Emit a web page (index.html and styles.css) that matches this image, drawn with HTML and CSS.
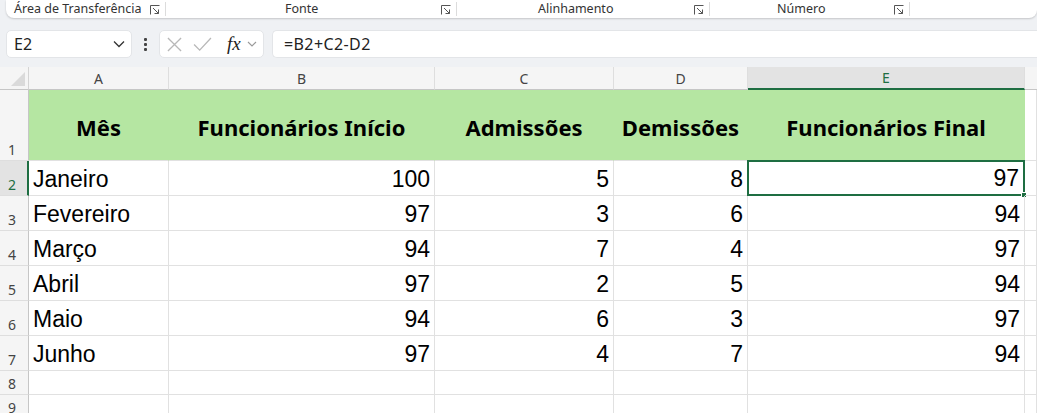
FILE: index.html
```html
<!DOCTYPE html>
<html lang="pt">
<head>
<meta charset="utf-8">
<title>Planilha</title>
<link rel="stylesheet" href="styles.css">
</head>
<body>
<div class="ribbon">
  <div class="group g1"><span class="glabel">Área de Transferência</span><svg class="launch" viewBox="0 0 10 10"><path d="M0.5 9.5V0.5H9.5" fill="none" stroke="#555" stroke-width="1"/><path d="M3 3L8.5 8.5M8.5 4.5V8.5H4.5" fill="none" stroke="#555" stroke-width="1"/></svg></div>
  <div class="group g2"><span class="glabel">Fonte</span><svg class="launch" viewBox="0 0 10 10"><path d="M0.5 9.5V0.5H9.5" fill="none" stroke="#555" stroke-width="1"/><path d="M3 3L8.5 8.5M8.5 4.5V8.5H4.5" fill="none" stroke="#555" stroke-width="1"/></svg></div>
  <div class="group g3"><span class="glabel">Alinhamento</span><svg class="launch" viewBox="0 0 10 10"><path d="M0.5 9.5V0.5H9.5" fill="none" stroke="#555" stroke-width="1"/><path d="M3 3L8.5 8.5M8.5 4.5V8.5H4.5" fill="none" stroke="#555" stroke-width="1"/></svg></div>
  <div class="group g4"><span class="glabel">Número</span><svg class="launch" viewBox="0 0 10 10"><path d="M0.5 9.5V0.5H9.5" fill="none" stroke="#555" stroke-width="1"/><path d="M3 3L8.5 8.5M8.5 4.5V8.5H4.5" fill="none" stroke="#555" stroke-width="1"/></svg></div>
</div>

<div class="fbar">
  <div class="namebox"><span>E2</span><svg class="chev" viewBox="0 0 12 8"><path d="M1 1.5L6 6.5L11 1.5" fill="none" stroke="#333" stroke-width="1.3"/></svg></div>
  <div class="dots"><span></span><span></span><span></span></div>
  <div class="fnbox">
    <svg class="ico-x" viewBox="0 0 16 16"><path d="M1 1L15 15M15 1L1 15" stroke="#b8b8b8" stroke-width="1.4" fill="none"/></svg>
    <svg class="ico-ok" viewBox="0 0 20 16"><path d="M1 8L7 14L19 1" stroke="#b8b8b8" stroke-width="1.4" fill="none"/></svg>
    <span class="fx">fx</span>
    <svg class="chev-s" viewBox="0 0 10 6"><path d="M1 1L5 5L9 1" fill="none" stroke="#999" stroke-width="1.1"/></svg>
  </div>
  <div class="formula">=B2+C2-D2</div>
</div>

<div class="sheet">
  <div class="corner"></div>
  <div class="ch">A</div><div class="ch">B</div><div class="ch">C</div><div class="ch">D</div><div class="ch sel">E</div><div class="ch last"></div>

  <div class="rh">1</div>
  <div class="c hd">Mês</div><div class="c hd">Funcionários Início</div><div class="c hd">Admissões</div><div class="c hd">Demissões</div><div class="c hd">Funcionários Final</div><div class="c"></div>

  <div class="rh rsel">2</div>
  <div class="c t">Janeiro</div><div class="c n">100</div><div class="c n">5</div><div class="c n">8</div><div class="c n active">97<span class="handle"></span></div><div class="c"></div>

  <div class="rh">3</div>
  <div class="c t">Fevereiro</div><div class="c n">97</div><div class="c n">3</div><div class="c n">6</div><div class="c n">94</div><div class="c"></div>

  <div class="rh">4</div>
  <div class="c t">Março</div><div class="c n">94</div><div class="c n">7</div><div class="c n">4</div><div class="c n">97</div><div class="c"></div>

  <div class="rh">5</div>
  <div class="c t">Abril</div><div class="c n">97</div><div class="c n">2</div><div class="c n">5</div><div class="c n">94</div><div class="c"></div>

  <div class="rh">6</div>
  <div class="c t">Maio</div><div class="c n">94</div><div class="c n">6</div><div class="c n">3</div><div class="c n">97</div><div class="c"></div>

  <div class="rh">7</div>
  <div class="c t">Junho</div><div class="c n">97</div><div class="c n">4</div><div class="c n">7</div><div class="c n">94</div><div class="c"></div>

  <div class="rh">8</div>
  <div class="c"></div><div class="c"></div><div class="c"></div><div class="c"></div><div class="c"></div><div class="c"></div>

  <div class="rh">9</div>
  <div class="c"></div><div class="c"></div><div class="c"></div><div class="c"></div><div class="c"></div><div class="c"></div>
</div>
</body>
</html>
```

FILE: styles.css
```css
* { box-sizing: border-box; }
html, body { margin: 0; padding: 0; }
body {
  width: 1037px;
  height: 413px;
  overflow: hidden;
  background: #eff1f4;
  font-family: "Noto Sans", "Open Sans", sans-serif;
  color: #000;
}

/* ribbon */
.ribbon {
  margin-left: 6px;
  height: 18px;
  background: #fff;
  border-radius: 0 0 8px 8px;
  box-shadow: 0 1px 2px rgba(0,0,0,0.18);
  display: flex;
  align-items: center;
}
.group {
  height: 14px;
  display: flex;
  align-items: center;
  border-right: 1px solid #dcdcdc;
}
.g1 { width: 160px; padding-left: 8px; }
.g2 { width: 291px; padding-left: 119px; }
.g3 { width: 253px; padding-left: 81px; }
.g4 { width: 200px; padding-left: 67px; }
.glabel {
  font-size: 12.5px;
  color: #333;
  line-height: 14px;
  white-space: nowrap;
}
.launch { width: 10px; height: 10px; margin: 1px 5px 0 auto; flex: none; }

/* formula bar */
.fbar {
  margin-top: 12px;
  height: 28px;
  display: flex;
  align-items: stretch;
  padding-left: 6px;
}
.namebox {
  width: 126px;
  background: #fff;
  border: 1px solid #e3e5e8;
  border-radius: 5px;
  display: flex;
  align-items: center;
  padding: 0 6px 0 7px;
  font-size: 16px;
  color: #222;
}
.namebox span { flex: 1; }
.chev { width: 12px; height: 8px; }
.dots {
  width: 27px;
  display: flex;
  flex-direction: column;
  align-items: center;
  justify-content: center;
  gap: 2px;
}
.dots span { width: 3px; height: 3px; background: #444; border-radius: 1px; }
.fnbox {
  width: 105px;
  background: #fff;
  border: 1px solid #e3e5e8;
  border-radius: 5px;
  display: flex;
  align-items: center;
  padding-left: 7px;
}
.ico-x { width: 15px; height: 15px; }
.ico-ok { width: 19px; height: 15px; margin-left: 11px; }
.fx {
  font-family: "Liberation Serif", "DejaVu Serif", serif;
  font-style: italic;
  font-size: 19px;
  color: #222;
  margin-left: 15px;
  line-height: 1;
  margin-top: -2px;
}
.chev-s { width: 10px; height: 6px; margin-left: 6px; }
.formula {
  flex: 1;
  margin-left: 8px;
  background: #fff;
  border: 1px solid #e3e5e8;
  border-right: none;
  border-radius: 5px 0 0 5px;
  font-size: 16px;
  color: #222;
  display: flex;
  align-items: center;
  padding-left: 11px;
  letter-spacing: 0.4px;
}

/* sheet */
.sheet {
  margin-top: 9px;
  display: grid;
  grid-template-columns: 29px 140px 266px 179px 134px 277px 12px;
  grid-template-rows: 23px 71px 35px 35px 35px 35px 35px 35px 24px 24px;
  background: #fff;
}
.corner {
  background: #f5f5f5;
  border-right: 1px solid #d4d4d4;
  border-bottom: 1px solid #c6c6c6;
  position: relative;
}
.corner::after {
  content: "";
  position: absolute;
  right: 3px;
  bottom: 3px;
  width: 0;
  height: 0;
  border-left: 14px solid transparent;
  border-bottom: 14px solid #dadada;
}
.ch {
  background: #f5f5f5;
  border-right: 1px solid #dedede;
  border-bottom: 1px solid #c6c6c6;
  font-size: 14px;
  color: #444;
  display: flex;
  align-items: center;
  justify-content: center;
  font-family: "Noto Sans", sans-serif;
}
.ch.sel {
  background: #e3e3e3;
  color: #1e6e42;
  border-bottom: 2px solid #1e6e42;
}
.ch.last { border-right: none; }
.rh {
  background: #f5f5f5;
  border-right: 1px solid #c6c6c6;
  border-bottom: 1px solid #dedede;
  font-size: 14px;
  color: #444;
  display: flex;
  align-items: flex-end;
  padding: 0 0 1px 8px;
  line-height: 18px;
}
.rh.rsel {
  color: #1e6e42;
  background: #e3e3e3;
  border-right: 2px solid #1e6e42;
}
.c {
  border-right: 1px solid #e1e1e1;
  border-bottom: 1px solid #e1e1e1;
  font-family: "Liberation Sans", Arial, sans-serif;
  font-size: 23px;
  display: flex;
  align-items: flex-end;
  padding: 0 4px 2px 4px;
  line-height: 28px;
  white-space: nowrap;
  position: relative;
}
.c.t { justify-content: flex-start; }
.c.n { justify-content: flex-end; }
.c.hd {
  background: #b5e6a2;
  border-right-color: #b5e6a2;
  font-family: "Noto Sans", sans-serif;
  font-weight: 700;
  font-size: 22px;
  align-items: center;
  justify-content: center;
  padding: 4px 4px 0;
}
.c.active {
  border: 2px solid #1e6e42;
  margin: -1px 0 0 -1px;
}
.handle {
  position: absolute;
  right: -4px;
  bottom: -4px;
  width: 6px;
  height: 6px;
  background: #1e6e42;
  border: 1px solid #fff;
}
```
